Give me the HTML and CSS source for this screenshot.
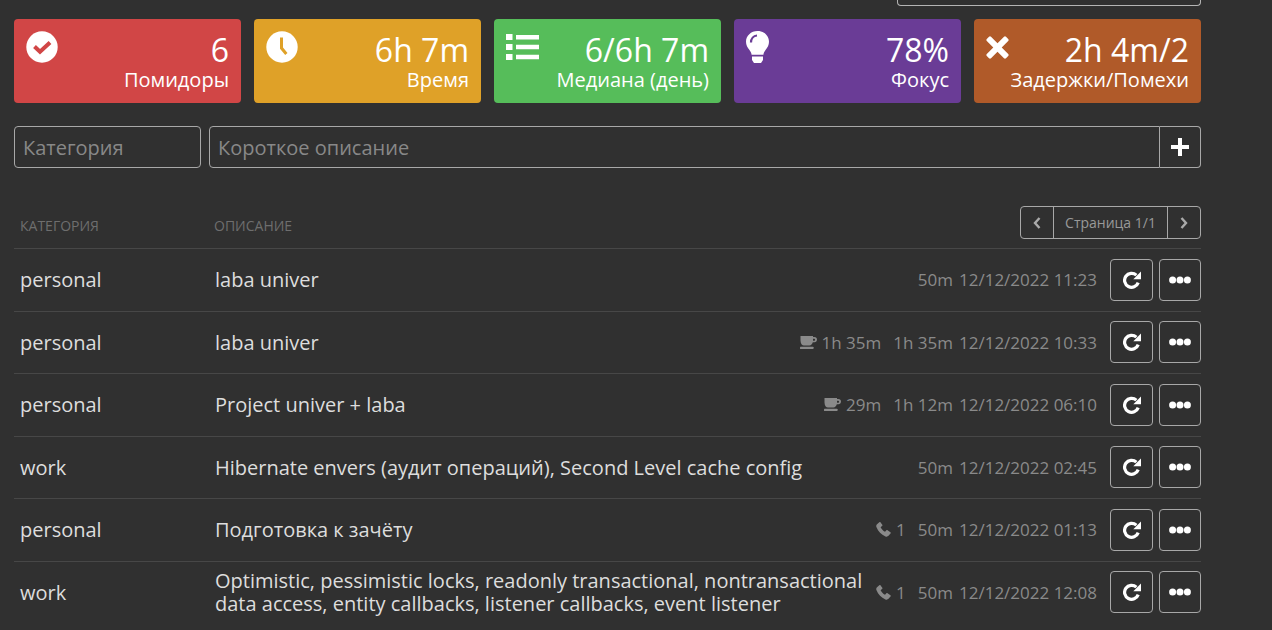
FILE: index.html
```html
<!DOCTYPE html>
<html lang="ru">
<head>
<meta charset="utf-8">
<title>Помидоры</title>
<link rel="stylesheet" href="styles.css">
</head>
<body>
<svg class="defs" aria-hidden="true">
  <defs>
    <symbol id="i-repeat" viewBox="0 0 18 18"><path d="M15.200 11.600A7 7 0 1 1 13.400 4.200" fill="none" stroke="currentColor" stroke-width="3.200"/><path d="M10.300 8.200H18V.4z" fill="currentColor"/></symbol>
    <symbol id="i-dots" viewBox="0 0 22 8"><circle cx="3.600" cy="4" r="3.500" fill="currentColor"/><circle cx="11" cy="4" r="3.500" fill="currentColor"/><circle cx="18.400" cy="4" r="3.500" fill="currentColor"/></symbol>
    <symbol id="i-cup" viewBox="0 0 17 13"><path d="M.5 0h12.500v1h1.400c1.600 0 2.600 1 2.600 2.600s-1 2.700-2.600 2.700h-1.600C12.300 8.300 11 9.500 9.500 9.500h-5.500C2 9.500.5 7.500.5 4.500zM13 2.700v2.100h.9c.8 0 1.200-.4 1.200-1.050s-.4-1.050-1.200-1.050z" fill="currentColor"/><rect x="0" y="10.700" width="13.500" height="2.300" rx=".6" fill="currentColor"/></symbol>
    <symbol id="i-phone" viewBox="0 0 15 15"><path d="M3.300.3 1 2.200C.2 3 0 4 .5 5.300c1.700 4.300 4.800 7.500 8.900 9.100 1.300.5 2.300.2 3.100-.6l2-2.200c.4-.5.400-1-.1-1.400l-2.800-2c-.5-.3-1-.3-1.400.2l-1.200 1.300C7 8.700 5.500 7.100 4.600 5.200L6 4.100c.5-.4.600-.9.300-1.400L4.600.5C4.200 0 3.800-.1 3.300.3z" fill="currentColor"/></symbol>
  </defs>
</svg>
<main class="page">
  <div class="topbox"></div>

  <section class="cards">
    <div class="card card-red">
      <svg class="card-icon icon-check" viewBox="0 0 32 32"><circle cx="16" cy="16" r="15.700" fill="#fff"/><path d="M8.500 15.500 14 20.800 24 11.500" fill="none" stroke="#d14646" stroke-width="4"/></svg>
      <div class="card-text"><div class="card-value">6</div><div class="card-label">Помидоры</div></div>
    </div>
    <div class="card card-yellow">
      <svg class="card-icon icon-clock" viewBox="0 0 32 32"><circle cx="16" cy="16" r="15.700" fill="#fff"/><path d="M14 6.500h3v10l4.500 5.500-2.300 2-5.200-6.300z" fill="#dfa128"/></svg>
      <div class="card-text"><div class="card-value">6h 7m</div><div class="card-label">Время</div></div>
    </div>
    <div class="card card-green">
      <svg class="card-icon icon-list" viewBox="0 0 33 26"><path d="M0 0h6.500v6H0zM10 1h23v4.500H10zM0 10h6.500v6H0zM10 10.800h23v4.500H10zM0 20h6.500v6H0zM10 20.800h23v4.500H10z" fill="#fff"/></svg>
      <div class="card-text"><div class="card-value">6/6h 7m</div><div class="card-label">Медиана (день)</div></div>
    </div>
    <div class="card card-purple">
      <svg class="card-icon icon-bulb" viewBox="0 0 23 32"><path d="M11.500 0C5 0 0 4.800 0 10.800c0 3.400 1.500 5.700 3.300 8 1.100 1.500 2 3 2.300 5h11.800c.3-2 1.200-3.500 2.300-5 1.800-2.300 3.300-4.600 3.300-8C23 4.800 18 0 11.500 0z" fill="#fff"/><path d="M5 11.500C5 7.500 7.500 4.800 11 4.500" fill="none" stroke="#6a3c96" stroke-width="2.200"/><path d="M6 25.500h11V29l-2 3H8l-2-3z" fill="#fff"/></svg>
      <div class="card-text"><div class="card-value">78%</div><div class="card-label">Фокус</div></div>
    </div>
    <div class="card card-brown">
      <svg class="card-icon icon-x" viewBox="0 0 23 23"><path d="M5 .8 11.500 7.300 18 .8a1.500 1.500 0 0 1 2 0l2.200 2.200a1.500 1.500 0 0 1 0 2L15.700 11.500 22.200 18a1.500 1.500 0 0 1 0 2L20 22.200a1.500 1.500 0 0 1-2 0L11.500 15.700 5 22.200a1.500 1.500 0 0 1-2 0L.8 20a1.500 1.500 0 0 1 0-2L7.300 11.500 .8 5a1.500 1.500 0 0 1 0-2L3 .8a1.500 1.500 0 0 1 2 0z" fill="#fff"/></svg>
      <div class="card-text"><div class="card-value">2h 4m/2</div><div class="card-label">Задержки/Помехи</div></div>
    </div>
  </section>

  <form class="entry">
    <input class="field field-cat" type="text" placeholder="Категория">
    <div class="entry-group">
      <input class="field field-desc" type="text" placeholder="Короткое описание">
      <button class="add" type="button" aria-label="Добавить"><svg viewBox="0 0 18 18"><path d="M7 0h4v7h7v4h-7v7H7v-7H0V7h7z" fill="#fff"/></svg></button>
    </div>
  </form>

  <div class="thead">
    <div class="th th-cat">Категория</div>
    <div class="th th-desc">Описание</div>
    <div class="pager">
      <button class="pager-btn" type="button" aria-label="Назад"><svg viewBox="0 0 8 12"><path d="M6.500 1 2 6l4.500 5" fill="none" stroke="currentColor" stroke-width="2.400"/></svg></button>
      <span class="pager-label">Страница 1/1</span>
      <button class="pager-btn" type="button" aria-label="Вперёд"><svg viewBox="0 0 8 12"><path d="M1.500 1 6 6l-4.500 5" fill="none" stroke="currentColor" stroke-width="2.400"/></svg></button>
    </div>
  </div>

  <div class="row">
    <div class="cat">personal</div>
    <div class="desc">laba univer</div>
    <div class="meta"><span class="dur">50m</span><span>12/12/2022 11:23</span></div>
    <div class="actions"><button class="act" type="button"><svg class="ic-repeat"><use href="#i-repeat"/></svg></button><button class="act" type="button"><svg class="ic-dots"><use href="#i-dots"/></svg></button></div>
  </div>
  <div class="row">
    <div class="cat">personal</div>
    <div class="desc">laba univer</div>
    <div class="meta"><span class="extra"><svg class="ic-cup"><use href="#i-cup"/></svg>1h 35m</span><span class="dur">1h 35m</span><span>12/12/2022 10:33</span></div>
    <div class="actions"><button class="act" type="button"><svg class="ic-repeat"><use href="#i-repeat"/></svg></button><button class="act" type="button"><svg class="ic-dots"><use href="#i-dots"/></svg></button></div>
  </div>
  <div class="row">
    <div class="cat">personal</div>
    <div class="desc">Project univer + laba</div>
    <div class="meta"><span class="extra"><svg class="ic-cup"><use href="#i-cup"/></svg>29m</span><span class="dur">1h 12m</span><span>12/12/2022 06:10</span></div>
    <div class="actions"><button class="act" type="button"><svg class="ic-repeat"><use href="#i-repeat"/></svg></button><button class="act" type="button"><svg class="ic-dots"><use href="#i-dots"/></svg></button></div>
  </div>
  <div class="row">
    <div class="cat">work</div>
    <div class="desc">Hibernate envers (аудит операций), Second Level cache config</div>
    <div class="meta"><span class="dur">50m</span><span>12/12/2022 02:45</span></div>
    <div class="actions"><button class="act" type="button"><svg class="ic-repeat"><use href="#i-repeat"/></svg></button><button class="act" type="button"><svg class="ic-dots"><use href="#i-dots"/></svg></button></div>
  </div>
  <div class="row">
    <div class="cat">personal</div>
    <div class="desc">Подготовка к зачёту</div>
    <div class="meta"><span class="extra"><svg class="ic-phone"><use href="#i-phone"/></svg>1</span><span class="dur">50m</span><span>12/12/2022 01:13</span></div>
    <div class="actions"><button class="act" type="button"><svg class="ic-repeat"><use href="#i-repeat"/></svg></button><button class="act" type="button"><svg class="ic-dots"><use href="#i-dots"/></svg></button></div>
  </div>
  <div class="row">
    <div class="cat">work</div>
    <div class="desc">Optimistic, pessimistic locks, readonly transactional, nontransactional data access, entity callbacks, listener callbacks, event listener</div>
    <div class="meta"><span class="extra"><svg class="ic-phone"><use href="#i-phone"/></svg>1</span><span class="dur">50m</span><span>12/12/2022 12:08</span></div>
    <div class="actions"><button class="act" type="button"><svg class="ic-repeat"><use href="#i-repeat"/></svg></button><button class="act" type="button"><svg class="ic-dots"><use href="#i-dots"/></svg></button></div>
  </div>
</main>
</body>
</html>
```
FILE: styles.css
```css
* { box-sizing: border-box; }
html, body { margin: 0; height: 100%; overflow: hidden; }
body { background: #303030; color: #ddd; font-family: "Open Sans", "Noto Sans", sans-serif; }
.defs { display: none; }
.page { width: 1187px; margin-left: 14px; }
.topbox { width: 304px; height: 6px; margin-left: auto; border: 1px solid #b4b4b4; border-top: 0; border-radius: 0 0 4px 4px; }

.cards { display: flex; gap: 13px; margin-top: 13px; }
.card { flex: 1; height: 84px; border-radius: 4px; padding: 12px 12px; display: flex; justify-content: space-between; color: #fff; }
.card-red { background: #d14646; }
.card-yellow { background: #dfa128; }
.card-green { background: #56bd5a; }
.card-purple { background: #6a3c96; }
.card-brown { background: #b05a29; }
.card-icon { display: block; flex: none; }
.icon-check, .icon-clock { width: 32px; height: 32px; }
.icon-list { width: 33px; height: 26px; margin-top: 3px; }
.icon-bulb { width: 23px; height: 32px; }
.icon-x { width: 23px; height: 23px; margin-top: 5px; }
.card-text { text-align: right; }
.card-value { font-size: 32px; line-height: 37px; }
.card-label { font-size: 20px; line-height: 24px; }

.entry { display: flex; gap: 8px; margin-top: 23px; }
.field { height: 42px; background: transparent; border: 1px solid #a8a8a8; border-radius: 4px; padding: 0 8px; color: #ddd; font: 20px "Open Sans", sans-serif; outline: none; }
.field::placeholder { color: #888; opacity: 1; }
.field-cat { width: 187px; flex: none; }
.entry-group { flex: 1; display: flex; }
.field-desc { flex: 1; min-width: 0; border-radius: 4px 0 0 4px; }
.add { width: 41px; height: 42px; padding: 0; background: transparent; border: 1px solid #a8a8a8; border-left: 0; border-radius: 0 4px 4px 0; display: flex; align-items: center; justify-content: center; }
.add svg { width: 18px; height: 18px; display: block; }

.thead { display: flex; align-items: flex-start; height: 42px; margin-top: 38px; }
.th { font-size: 14px; line-height: 18px; text-transform: uppercase; color: #6e6e6e; padding-top: 11px; }
.th-cat { width: 200px; padding-left: 6px; }
.th-desc { flex: 1; }
.pager { display: flex; height: 33px; border: 1px solid #a8a8a8; border-radius: 4px; color: #aaa; }
.pager-btn { width: 32px; padding: 0; background: transparent; border: 0; color: #aaa; display: flex; align-items: center; justify-content: center; }
.pager-btn svg { width: 8px; height: 12px; display: block; }
.pager-label { width: 115px; font-size: 14px; line-height: 31px; text-align: center; white-space: nowrap; border-left: 1px solid #a8a8a8; border-right: 1px solid #a8a8a8; color: #999; }

.row { display: flex; align-items: center; height: 62.5px; border-top: 1px solid #474747; font-size: 20px; }
.cat { width: 201px; flex: none; padding-left: 6px; line-height: 23px; }
.desc { flex: 1; min-width: 0; line-height: 23px; padding-right: 8px; }
.meta { flex: none; display: flex; align-items: center; gap: 6px; font-size: 17px; color: #8a8a8a; }
.extra { display: flex; align-items: center; gap: 5px; margin-right: 6px; }
.ic-cup { width: 17px; height: 13px; display: block; }
.ic-phone { width: 15px; height: 15px; display: block; }
.actions { flex: none; display: flex; gap: 6px; margin-left: 13px; }
.act { width: 42px; height: 42px; padding: 0; background: transparent; border: 1px solid #a8a8a8; border-radius: 4px; color: #fff; display: flex; align-items: center; justify-content: center; }
.act:first-child { width: 43px; }
.ic-repeat { width: 18px; height: 18px; display: block; }
.ic-dots { width: 22px; height: 8px; display: block; }
```
